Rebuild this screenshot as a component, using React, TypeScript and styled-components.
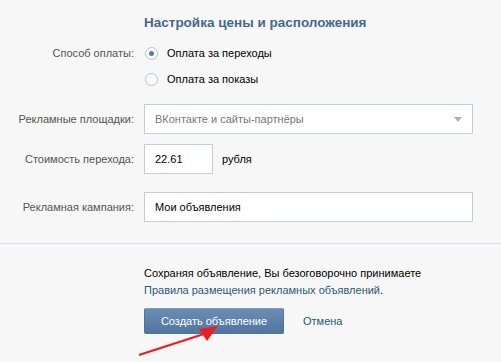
import React from 'react';
import styled, {createGlobalStyle} from "styled-components";

const GlobalStyle = createGlobalStyle`
  html, body {
    margin: 0;
    padding: 0;
    background: #f7f7f7;
  }
  body {
    font-family: 'Liberation Sans', Arial, sans-serif;
    font-size: 11px;
    color: #000;
  }
`

export default function App() {
    return (
        <Page>
            <GlobalStyle/>
            <Form>
                <Row $top={13}>
                    <Label/>
                    <Title>Настройка цены и расположения</Title>
                </Row>

                <Row $top={7}>
                    <Label>Способ оплаты:</Label>
                    <RadioLine>
                        <Radio $checked/>
                        Оплата за переходы
                    </RadioLine>
                </Row>
                <Row $top={0}>
                    <Label/>
                    <RadioLine>
                        <Radio/>
                        Оплата за показы
                    </RadioLine>
                </Row>

                <Row $top={12}>
                    <Label>Рекламные площадки:</Label>
                    <Select>
                        <span>ВКонтакте и сайты-партнёры</span>
                        <SelectArrow/>
                    </Select>
                </Row>

                <Row $top={10}>
                    <Label>Стоимость перехода:</Label>
                    <Inline>
                        <Input $width={69}>22.61</Input>
                        <span>рубля</span>
                    </Inline>
                </Row>

                <Row $top={18}>
                    <Label>Рекламная кампания:</Label>
                    <Input $width={329}>Мои объявления</Input>
                </Row>
            </Form>

            <Separator/>

            <Footer>
                <Label/>
                <div>
                    <Note>
                        Сохраняя объявление, Вы безоговорочно принимаете<br/>
                        <Link>Правила размещения рекламных объявлений</Link>.
                    </Note>
                    <Buttons>
                        <Button>Создать объявление</Button>
                        <Link>Отмена</Link>
                    </Buttons>
                </div>
            </Footer>

            <Arrow width="501" height="362" viewBox="0 0 501 362">
                <line x1="139" y1="355" x2="207" y2="333" stroke="#ec1c24" strokeWidth="2.2"/>
                <polygon points="218,326 199,329 207,341" fill="#ec1c24"/>
            </Arrow>
        </Page>
    );
}

const Page = styled.div`
  position: relative;
  width: 501px;
  height: 362px;
  overflow: hidden;
`

const Form = styled.div`
  display: flex;
  flex-direction: column;
`

const Row = styled.div<{ $top: number }>`
  display: grid;
  grid-template-columns: 134px 1fr;
  column-gap: 10px;
  align-items: center;
  margin-top: ${p => p.$top}px;
`

const Label = styled.div`
  text-align: right;
  color: #555;
`

const Title = styled.div`
  font-size: 13.5px;
  font-weight: bold;
  color: #45688e;
  line-height: 20px;
`

const RadioLine = styled.div`
  display: flex;
  align-items: center;
  gap: 9px;
  height: 26px;
  padding-left: 1px;
`

const Radio = styled.span<{ $checked?: boolean }>`
  box-sizing: border-box;
  width: 13px;
  height: 13px;
  border-radius: 50%;
  border: 1px solid #b7c2ce;
  background: #fff;
  display: flex;
  align-items: center;
  justify-content: center;

  &::after {
    content: "";
    display: ${p => p.$checked ? 'block' : 'none'};
    width: 5px;
    height: 5px;
    border-radius: 50%;
    background: #5a7ea5;
  }
`

const Select = styled.div`
  box-sizing: border-box;
  width: 329px;
  height: 30px;
  border: 1px solid #c5ced8;
  background: #fff;
  color: #777;
  display: flex;
  align-items: center;
  justify-content: space-between;
  padding: 0 10px 0 10px;
`

const SelectArrow = styled.span`
  width: 0;
  height: 0;
  border-left: 4px solid transparent;
  border-right: 4px solid transparent;
  border-top: 5px solid #a8b2bd;
`

const Inline = styled.div`
  display: flex;
  align-items: center;
  gap: 9px;
`

const Input = styled.div<{ $width: number }>`
  box-sizing: border-box;
  width: ${p => p.$width}px;
  height: 30px;
  border: 1px solid #c5ced8;
  background: #fff;
  display: flex;
  align-items: center;
  padding-left: 10px;
`

const Separator = styled.div`
  margin-top: 21px;
  height: 1px;
  background: #dae1e8;
`

const Footer = styled.div`
  display: grid;
  grid-template-columns: 134px 1fr;
  column-gap: 10px;
  margin-top: 21px;
`

const Note = styled.div`
  line-height: 17px;
`

const Link = styled.span`
  color: #2b587a;
`

const Buttons = styled.div`
  display: flex;
  align-items: center;
  gap: 19px;
  margin-top: 9px;
`

const Button = styled.div`
  box-sizing: border-box;
  width: 140px;
  height: 26px;
  display: flex;
  align-items: center;
  justify-content: center;
  color: #fff;
  font-size: 11px;
  background: linear-gradient(#6a8db3, #5076a0);
  border: 1px solid #4f739c;
  border-top-color: #7e9dc0;
  border-radius: 2px;
`

const Arrow = styled.svg`
  position: absolute;
  left: 0;
  top: 0;
  pointer-events: none;
`
